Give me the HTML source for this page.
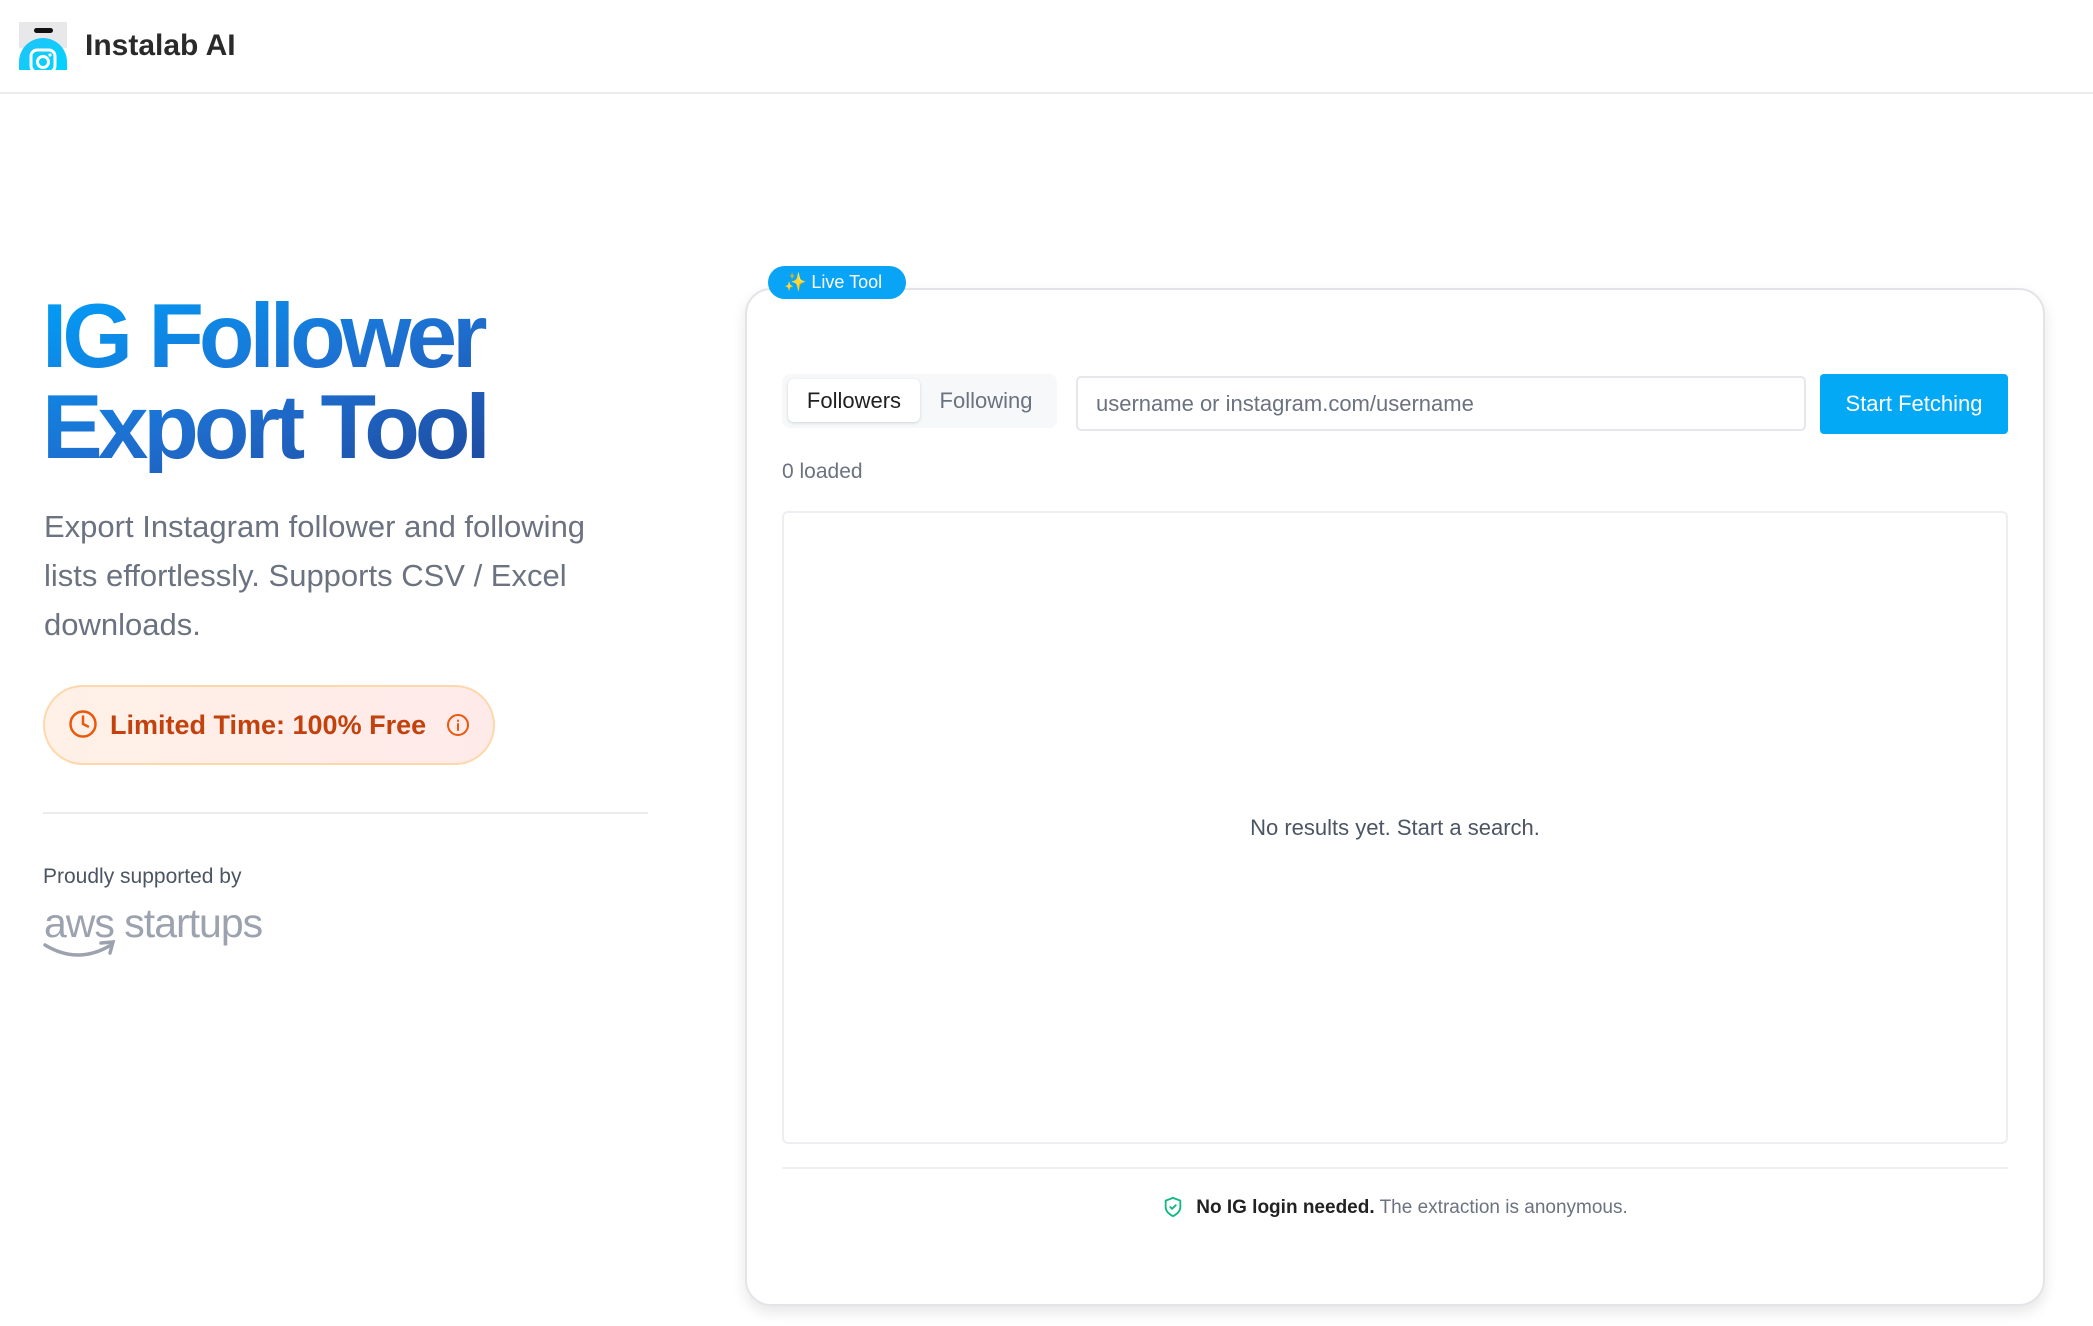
<!DOCTYPE html>
<html><head><meta charset="utf-8"><style>
*{box-sizing:border-box;margin:0;padding:0}
html,body{width:2093px;height:1326px;overflow:hidden;background:#fff;font-family:"Liberation Sans",sans-serif}
.abs{position:absolute}
</style></head><body>
<div class="abs" style="left:0;top:0;width:2093px;height:94px;border-bottom:2px solid #ececef"></div>
<!-- logo -->
<svg class="abs" style="left:19px;top:22px" width="48" height="48" viewBox="0 0 48 48">
<rect x="0" y="0" width="48" height="26" fill="#e8e8ea"/>
<rect x="15" y="6" width="19" height="5" rx="2.5" fill="#111"/>
<defs><linearGradient id="lg" x1="0" y1="0" x2="1" y2="1"><stop offset="0" stop-color="#22c3f5"/><stop offset="1" stop-color="#00d4ff"/></linearGradient></defs>
<path d="M0 48 V40 A24 24 0 0 1 48 40 V48 Z" fill="url(#lg)"/>
<rect x="12" y="28" width="24" height="22" rx="6" fill="none" stroke="#fff" stroke-width="3"/>
<circle cx="24" cy="40" r="5.5" fill="none" stroke="#fff" stroke-width="3"/>
<circle cx="31" cy="33" r="1.6" fill="#fff"/>
</svg>
<div class="abs" style="left:85px;top:27px;font-size:30px;font-weight:600;color:#2a2a2a;line-height:38px">Instalab AI</div>

<!-- hero -->
<div class="abs" style="left:42px;top:291px;font-size:91px;font-weight:700;letter-spacing:-5px;line-height:91px;background:linear-gradient(160deg,#009ff8 0%,#1e6fd0 45%,#1e3a8a 100%);-webkit-background-clip:text;background-clip:text;color:transparent;width:620px">IG Follower<br>Export Tool</div>
<div class="abs" style="left:44px;top:502px;width:590px;font-size:31px;line-height:49px;color:#6b7280">Export Instagram follower and following lists effortlessly. Supports CSV / Excel downloads.</div>

<div class="abs" style="left:43px;top:685px;width:452px;height:80px;border-radius:40px;border:2px solid #fed7aa;background:linear-gradient(90deg,#fff1e7,#ffeaea)"></div>
<svg class="abs" style="left:68px;top:709px" width="30" height="30" viewBox="0 0 24 24" fill="none" stroke="#ea580c" stroke-width="2" stroke-linecap="round"><circle cx="12" cy="12" r="10"/><path d="M12 6v6l4 2"/></svg>
<div class="abs" style="left:110px;top:708px;font-size:27px;font-weight:700;color:#c2410c;line-height:34px">Limited Time: 100% Free</div>
<svg class="abs" style="left:446px;top:713px" width="24" height="24" viewBox="0 0 24 24" fill="none" stroke="#ea580c" stroke-width="2" stroke-linecap="round"><circle cx="12" cy="12" r="10"/><path d="M12 11v6M12 7.5v.5"/></svg>

<div class="abs" style="left:43px;top:812px;width:605px;height:2px;background:#ececef"></div>
<div class="abs" style="left:43px;top:864px;font-size:21px;color:#4b5563;line-height:26px">Proudly supported by</div>
<div class="abs" style="left:44px;top:900px;font-size:41px;color:#9ca3af;letter-spacing:-1px;line-height:46px">aws startups</div>
<svg class="abs" style="left:43px;top:937px" width="75" height="24" viewBox="0 0 75 24" fill="none" stroke="#9ca3af" stroke-width="3.5" stroke-linecap="round"><path d="M2 8 Q35 28 68 8"/><path d="M58 6 L70 5 L67 16"/></svg>

<!-- card -->
<div class="abs" style="left:745px;top:288px;width:1300px;height:1018px;border:2px solid #e3e4e8;border-radius:26px;box-shadow:0 6px 14px rgba(0,0,0,0.10)"></div>
<div class="abs" style="left:768px;top:266px;width:138px;height:33px;border-radius:17px;background:#0aa4f6;color:#fff;font-size:18px;line-height:33px;padding-left:16px">✨ Live Tool</div>

<div class="abs" style="left:782px;top:374px;width:275px;height:54px;border-radius:8px;background:#f7f8fa"></div>
<div class="abs" style="left:788px;top:379px;width:132px;height:43px;border-radius:6px;background:#fff;box-shadow:0 1px 3px rgba(0,0,0,0.15);font-size:22px;color:#1f1f1f;text-align:center;line-height:43px">Followers</div>
<div class="abs" style="left:920px;top:379px;width:132px;height:43px;font-size:22px;color:#6b7280;text-align:center;line-height:43px">Following</div>
<div class="abs" style="left:1076px;top:376px;width:730px;height:55px;border:2px solid #e5e7eb;border-radius:5px;font-size:22px;color:#6b7280;line-height:51px;padding-left:18px">username or instagram.com/username</div>
<div class="abs" style="left:1820px;top:374px;width:188px;height:60px;border-radius:4px;background:#03a9f4;color:#fff;font-size:22px;text-align:center;line-height:60px">Start Fetching</div>

<div class="abs" style="left:782px;top:459px;font-size:21px;color:#6b7280;line-height:26px">0 loaded</div>
<div class="abs" style="left:782px;top:511px;width:1226px;height:633px;border:2px solid #eceef1;border-radius:6px"></div>
<div class="abs" style="left:782px;top:814px;width:1226px;text-align:center;font-size:22px;color:#4b5563;line-height:28px">No results yet. Start a search.</div>
<div class="abs" style="left:782px;top:1167px;width:1226px;height:2px;background:#eceef1"></div>

<div class="abs" style="left:782px;top:1195px;width:1226px;text-align:center;font-size:19px;line-height:26px;color:#6b7280;white-space:nowrap">
<svg width="22" height="24" viewBox="0 0 24 24" fill="none" stroke="#10b981" stroke-width="2" stroke-linecap="round" stroke-linejoin="round" style="vertical-align:-6px;margin-right:12px"><path d="M12 2l8 3v7c0 5-4 8-8 10-4-2-8-5-8-10V5z"/><path d="M9 12l2 2 4-4"/></svg><b style="color:#222;font-weight:600">No IG login needed.</b> The extraction is anonymous.</div>
</body></html>
